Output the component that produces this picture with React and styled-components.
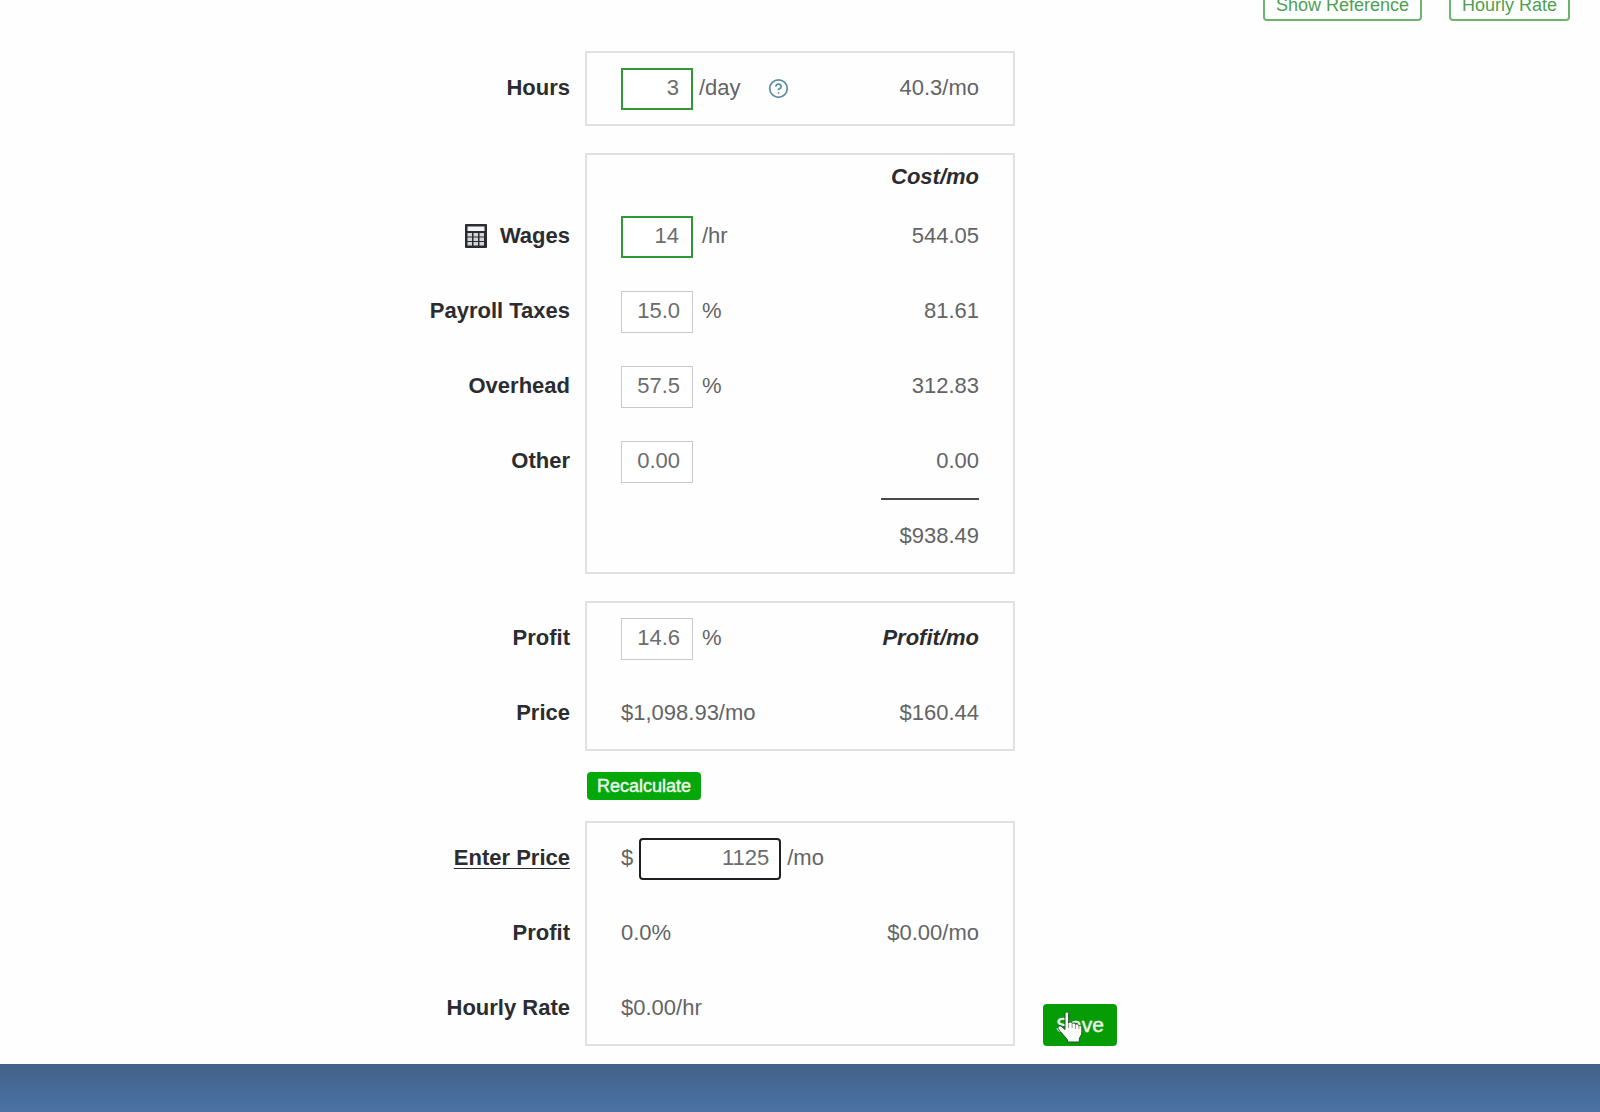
import React from 'react';
import styled, { createGlobalStyle } from 'styled-components';
import { CircleHelp } from 'lucide-react';

const GlobalStyle = createGlobalStyle`
  * {
    box-sizing: border-box;
  }

  body {
    margin: 0;
    background: #fefefe;
    color: #636466;
    font-family: 'Liberation Sans', Arial, sans-serif;
    font-size: 22px;
    line-height: 26px;
  }
`;

const Page = styled.div`
  display: flex;
  flex-direction: column;
  min-height: 100vh;
  overflow: hidden;
`;

const Toolbar = styled.header`
  display: flex;
  justify-content: flex-end;
  gap: 27px;
  margin-top: -9px;
  padding-right: 30px;
`;

const OutlineButton = styled.button`
  height: 30px;
  padding: 0 11px 2px;
  border: 2px solid #6db56f;
  border-radius: 4px;
  background: #fff;
  color: #4d9f51;
  font: 18px 'Liberation Sans', Arial, sans-serif;
`;

const SolidButton = styled.button`
  position: relative;
  height: ${props => (props.$large ? '42px' : '28px')};
  padding: ${props => (props.$large ? '0 13px' : '0 10px')};
  border: 0;
  border-radius: 4px;
  background: ${props => (props.$large ? '#069c06' : '#05a80b')};
  color: #f0fbf0;
  font-family: 'Liberation Sans', Arial, sans-serif;
  font-size: ${props => (props.$large ? '21px' : '18px')};
  -webkit-text-stroke: 0.4px #f0fbf0;
`;

const Form = styled.form`
  padding: 30px 0 18px;
`;

const Section = styled.section`
  display: grid;
  grid-template-columns: 1fr 430px 1fr;
  margin-bottom: ${props => (props.$last ? '0' : '27px')};
`;

const Labels = styled.div`
  display: grid;
  gap: 7px;
  align-content: start;
  padding: 2px 15px 0 0;
`;

const Panel = styled.div`
  display: grid;
  gap: 7px;
  padding: 0 34px 3px 34px;
  border: 2px solid #e0e0e0;
`;

const Side = styled.div`
  display: flex;
  align-items: flex-end;
  padding-left: 28px;
`;

const LabelRow = styled.div`
  display: flex;
  align-items: center;
  justify-content: flex-end;
  gap: 13px;
  height: ${props => (props.$header ? '39px' : '68px')};
  padding-top: 2px;
  color: #2b2c30;
  font-weight: bold;
`;

const Label = styled.label`
  text-decoration: ${props => (props.$underlined ? 'underline' : 'none')};
  text-decoration-thickness: 1px;
  text-underline-offset: 3px;
`;

const Row = styled.div`
  display: flex;
  align-items: center;
  justify-content: space-between;
  height: ${props => (props.$header ? '39px' : '68px')};
  padding-top: ${props => (props.$header ? '4px' : '2px')};
`;

const Field = styled.div`
  display: flex;
  align-items: center;
  gap: ${props => (props.$tight ? '6px' : '9px')};
`;

const NumberInput = styled.input`
  width: ${props => (props.$wide ? '142px' : '72px')};
  height: 42px;
  margin-top: 2px;
  padding: 0 12px 2px 0;
  border: ${props => (props.$changed ? '2px solid #2f9a35' : '1px solid #c9c9c9')};
  border-radius: 0;
  outline: 0;
  background: #fff;
  color: #6b6c6e;
  font: 22px 'Liberation Sans', Arial, sans-serif;
  text-align: right;
`;

const PriceInput = styled(NumberInput)`
  padding-right: 10px;
  border: 2px solid #1e1f22;
  border-radius: 4px;
`;

const HelpButton = styled.button`
  display: flex;
  margin-left: 21px;
  padding: 0;
  border: 0;
  background: none;
  color: #5b8da3;
`;

const Heading = styled.span`
  color: #2b2c30;
  font-style: italic;
  font-weight: bold;
`;

const Total = styled.output`
  display: flex;
  align-items: center;
  justify-content: flex-end;
  align-self: stretch;
  width: 98px;
  margin-top: -5px;
  padding-top: 2px;
  border-top: 2px solid #4a4a4c;
`;

const Actions = styled.div`
  display: grid;
  grid-template-columns: 1fr 426px 1fr;
  margin: -6px 0 21px;

  > * {
    grid-column: 2;
    justify-self: start;
  }
`;

const Pointer = styled.svg`
  position: absolute;
  left: 14px;
  top: 7px;
`;

const Footer = styled.footer`
  flex: 1;
  background: linear-gradient(#436188, #4b73a4);
`;

const CalculatorIcon = () => (
  <svg width="22" height="24" viewBox="0 0 22 24" aria-hidden="true">
    <rect width="22" height="24" rx="1" fill="#2b2c30" />
    <rect x="2.500" y="2.500" width="17" height="4.500" fill="#f4f4f4" />
    {[2.5, 8.5, 14.5].map(x =>
      [9, 13.5, 18].map(y => (
        <rect key={`${x}-${y}`} x={x} y={y} width="4.500" height="3.500" fill="#d4d4d8" />
      ))
    )}
  </svg>
);

const HandPointer = () => (
  <Pointer width="26" height="32" viewBox="0 0 26 32" aria-hidden="true">
    <path
      d="M8 3c0-2.600 3.600-2.600 3.600 0v9c.5-1.500 3.200-1.300 3.500.6.600-1.200 3.100-.9 3.400.9.800-1 3.200-.5 3.400 1.400.8-.9 2.900-.3 2.900 1.600v5.500c0 2.500-2.500 4-2.500 6.500V31H10.500v-2C8.500 26 3 20.500 1.400 18c-1.300-2.100.9-3.900 2.800-2.600L8 18.500z"
      fill="#fbfbfb"
      stroke="#24552a"
      strokeWidth="1"
    />
    <path d="M11.600 12v5M15.100 13v4M18.500 14v4M21.900 15v3" stroke="#8c9c8d" strokeWidth="1" />
  </Pointer>
);

const PercentRow = props => (
  <Row>
    <Field>
      <NumberInput id={props.id} defaultValue={props.value} />
      {props.unit}
    </Field>
    {props.children}
  </Row>
);

const App = () => (
  <Page>
    <GlobalStyle />
    <Toolbar>
      <OutlineButton>Show Reference</OutlineButton>
      <OutlineButton>Hourly Rate</OutlineButton>
    </Toolbar>
    <Form onSubmit={e => e.preventDefault()}>
      <Section>
        <Labels>
          <LabelRow>
            <Label htmlFor="hours">Hours</Label>
          </LabelRow>
        </Labels>
        <Panel>
          <Row>
            <Field $tight>
              <NumberInput id="hours" defaultValue="3" $changed />
              /day
              <HelpButton type="button" aria-label="Help">
                <CircleHelp size={21} />
              </HelpButton>
            </Field>
            <span>40.3/mo</span>
          </Row>
        </Panel>
      </Section>

      <Section>
        <Labels>
          <LabelRow $header />
          <LabelRow>
            <CalculatorIcon />
            <Label htmlFor="wages">Wages</Label>
          </LabelRow>
          <LabelRow>
            <Label htmlFor="taxes">Payroll Taxes</Label>
          </LabelRow>
          <LabelRow>
            <Label htmlFor="overhead">Overhead</Label>
          </LabelRow>
          <LabelRow>
            <Label htmlFor="other">Other</Label>
          </LabelRow>
        </Labels>
        <Panel>
          <Row $header>
            <span />
            <Heading>Cost/mo</Heading>
          </Row>
          <Row>
            <Field>
              <NumberInput id="wages" defaultValue="14" $changed />
              /hr
            </Field>
            <span>544.05</span>
          </Row>
          <PercentRow id="taxes" value="15.0" unit="%">
            <span>81.61</span>
          </PercentRow>
          <PercentRow id="overhead" value="57.5" unit="%">
            <span>312.83</span>
          </PercentRow>
          <PercentRow id="other" value="0.00">
            <span>0.00</span>
          </PercentRow>
          <Row>
            <span />
            <Total>$938.49</Total>
          </Row>
        </Panel>
      </Section>

      <Section>
        <Labels>
          <LabelRow>
            <Label htmlFor="profit">Profit</Label>
          </LabelRow>
          <LabelRow>Price</LabelRow>
        </Labels>
        <Panel>
          <PercentRow id="profit" value="14.6" unit="%">
            <Heading>Profit/mo</Heading>
          </PercentRow>
          <Row>
            <span>$1,098.93/mo</span>
            <span>$160.44</span>
          </Row>
        </Panel>
      </Section>

      <Actions>
        <SolidButton type="button">Recalculate</SolidButton>
      </Actions>

      <Section $last>
        <Labels>
          <LabelRow>
            <Label htmlFor="price" $underlined>Enter Price</Label>
          </LabelRow>
          <LabelRow>Profit</LabelRow>
          <LabelRow>Hourly Rate</LabelRow>
        </Labels>
        <Panel>
          <Row>
            <Field $tight>
              $
              <PriceInput id="price" defaultValue="1125" $wide />
              /mo
            </Field>
          </Row>
          <Row>
            <span>0.0%</span>
            <span>$0.00/mo</span>
          </Row>
          <Row>
            <span>$0.00/hr</span>
          </Row>
        </Panel>
        <Side>
          <SolidButton $large>
            Save
            <HandPointer />
          </SolidButton>
        </Side>
      </Section>
    </Form>
    <Footer />
  </Page>
);

export default App;
